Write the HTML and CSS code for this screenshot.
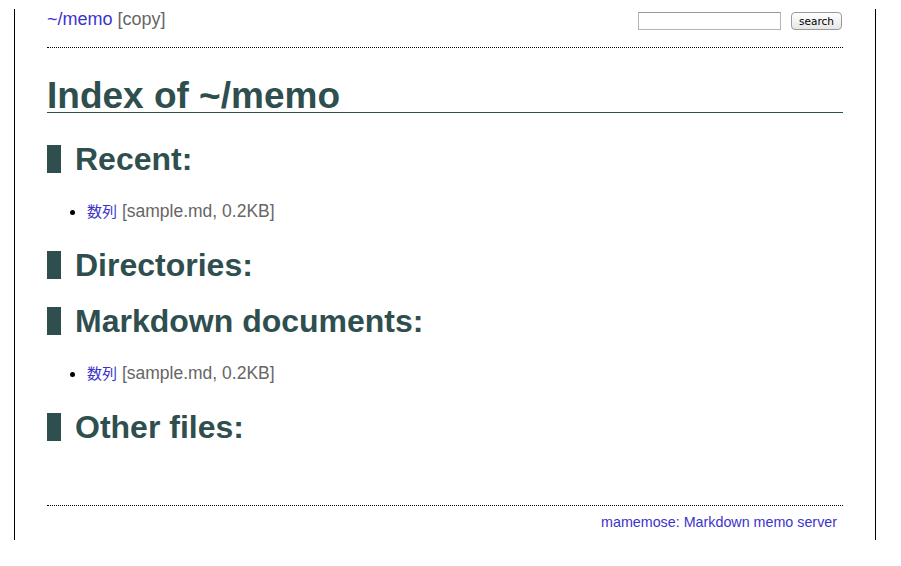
FILE: index.html
```html
<!DOCTYPE html>
<html>
<head>
<meta charset="utf-8">
<title>Index of ~/memo</title>
<link rel="stylesheet" href="styles.css">
</head>
<body>
<div class="page">
  <div class="header">
    <div class="crumbs"><a class="link" href="#">~/memo</a> <span class="muted">[copy]</span></div>
    <form class="search">
      <input class="search-input" type="text">
      <button class="search-btn" type="button">search</button>
    </form>
  </div>
  <div class="main">
    <h1 class="title">Index of ~/memo</h1>
    <h2 class="section">Recent:</h2>
    <ul class="files">
      <li><a class="link ja" href="#">数列</a> <span class="muted">[sample.md, 0.2KB]</span></li>
    </ul>
    <h2 class="section">Directories:</h2>
    <h2 class="section">Markdown documents:</h2>
    <ul class="files">
      <li><a class="link ja" href="#">数列</a> <span class="muted">[sample.md, 0.2KB]</span></li>
    </ul>
    <h2 class="section">Other files:</h2>
  </div>
  <div class="footer"><a class="link" href="#">mamemose: Markdown memo server</a></div>
</div>
</body>
</html>
```
FILE: styles.css
```css
html, body {
  margin: 0;
  padding: 0;
  background: #fff;
}
body {
  font-family: "Liberation Sans", Arial, "Noto Sans CJK JP", sans-serif;
  color: #000;
}
.page {
  margin: 9px 0 0 14px;
  width: 796px;
  padding: 0 32px;
  border-left: 1px solid #000;
  border-right: 1px solid #000;
}
.header {
  display: flex;
  justify-content: space-between;
  align-items: flex-start;
  height: 38px;
  border-bottom: 1px dotted #000;
}
.crumbs {
  font-size: 18px;
  line-height: 20px;
}
.link {
  color: #3b33cc;
  text-decoration: none;
}
.muted {
  color: #666;
}
.ja {
  font-family: "Noto Sans CJK JP", sans-serif;
  font-size: 15px;
  line-height: 16px;
}
.search {
  display: flex;
  gap: 10px;
  margin: 3px 0 0 0;
}
.search-input {
  box-sizing: border-box;
  width: 143px;
  height: 18px;
  margin: 0;
  padding: 0 3px;
  border: 1px solid #b4b4b4;
  border-top-color: #999;
  background: #fff;
}
.search-btn {
  box-sizing: border-box;
  width: 51px;
  height: 18px;
  margin: 0 1px 0 0;
  padding: 0;
  border: 1px solid #9a9a9a;
  border-radius: 4px;
  background: linear-gradient(#ffffff, #e6e6e6);
  font-family: "DejaVu Sans", sans-serif;
  font-size: 10.5px;
  line-height: 16px;
  color: #000;
}
.title {
  margin: 31px 0 32px;
  font-size: 37px;
  line-height: 33px;
  font-weight: bold;
  color: #2f4f4f;
  border-bottom: 1px solid #2f4f4f;
}
.section {
  margin: 28px 0;
  padding-left: 14px;
  font-size: 32px;
  line-height: 28px;
  font-weight: bold;
  color: #2f4f4f;
  border-left: 14px solid #2f4f4f;
}
.files {
  margin: 28px 0;
  padding-left: 40px;
  font-size: 17.5px;
  line-height: 20px;
}
.files li {
  padding-bottom: 2px;
}
.footer {
  margin-top: 64px;
  border-top: 1px dotted #000;
  text-align: right;
  padding: 8px 6px 9px 0;
  font-size: 14.3px;
  line-height: 17px;
}
```
